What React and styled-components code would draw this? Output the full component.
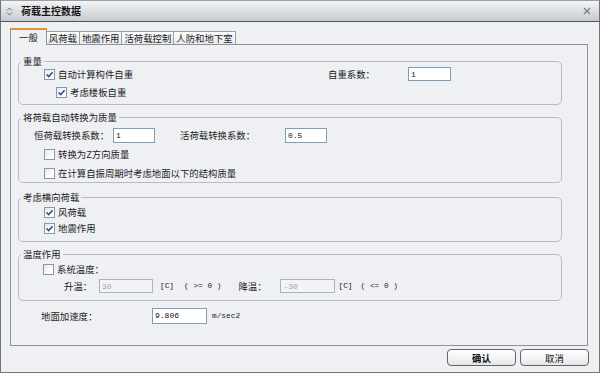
import React from "react";
import styled, { createGlobalStyle } from "styled-components";

const GlobalStyle = createGlobalStyle`
  html, body {
    margin: 0;
    padding: 0;
    background: #ffffff;
  }
  body {
    font-family: "Noto Sans CJK SC", "Noto Sans", sans-serif;
  }
  * {
    box-sizing: border-box;
  }
`;

const Window = styled.div`
  width: 600px;
  height: 373px;
  display: flex;
  flex-direction: column;
  background: #eef0f4;
  border: 1px solid #6f737a;
  border-top-color: #9a9ea5;
  font-size: 9.4px;
  line-height: 12px;
  color: #1c1c1c;
  overflow: hidden;
`;

const TitleBar = styled.div`
  height: 21px;
  flex: none;
  display: flex;
  align-items: center;
  padding: 0 8px 0 5px;
  background: linear-gradient(#f3f4f6, #dadde1 55%, #c6cad0);
  border-bottom: 1px solid #50545a;
`;

const Title = styled.span`
  margin-left: 8px;
  font-size: 10px;
  font-weight: bold;
  color: #151515;
`;

const Close = styled.span`
  margin-left: auto;
  display: flex;
`;

const Body = styled.div`
  flex: 1;
  display: flex;
  flex-direction: column;
  padding: 6px 11px 0 9px;
`;

const TabStrip = styled.div`
  height: 17px;
  margin-bottom: -1px;
  display: flex;
  align-items: flex-end;
`;

const Tab = styled.div`
  height: ${(p) => (p.$active ? 17 : 14)}px;
  padding: ${(p) => (p.$active ? "1px 8px 0" : "0 2px")};
  border: 1px solid ${(p) => (p.$active ? "#8d9199" : "#9aa0a8")};
  border-top: ${(p) => (p.$active ? "2px solid #e8912f" : "1px solid #9aa0a8")};
  border-bottom: none;
  margin-left: ${(p) => (p.$active ? 0 : -1)}px;
  background: ${(p) =>
    p.$active ? "#eef0f4" : "linear-gradient(#fdfdfd, #e9eaed)"};
  position: ${(p) => (p.$active ? "relative" : "static")};
  z-index: ${(p) => (p.$active ? 2 : "auto")};
  white-space: nowrap;
  line-height: 12px;
  color: #1a1a1a;
`;

const Panel = styled.div`
  height: 302px;
  flex: none;
  border: 1px solid #8d9199;
  padding: 10px 25px 0 7px;
  display: flex;
  flex-direction: column;
  background: #eef0f4;
`;

const Group = styled.fieldset`
  margin: ${(p) => p.$top || 0}px 0 0 0;
  padding: 0;
  border: 1px solid #b9bcc4;
  border-radius: 5px;
  min-width: 0;
`;

const Legend = styled.legend`
  margin-left: 2px;
  padding: 0 2px;
  height: 12px;
  line-height: 12px;
  font-size: 9.4px;
  color: #1c1c1c;
`;

const GroupBody = styled.div`
  display: flex;
  flex-direction: column;
  gap: ${(p) => p.$gap || 0}px;
  padding: ${(p) => p.$pad};
`;

const Row = styled.div`
  display: flex;
  align-items: center;
  height: ${(p) => p.$h}px;
  padding-left: ${(p) => p.$indent || 0}px;
  margin-top: ${(p) => p.$top || 0}px;
  flex: none;
`;

const Cell = styled.span`
  flex: none;
  width: ${(p) => (p.$w ? `${p.$w}px` : "auto")};
  margin-left: ${(p) => p.$ml || 0}px;
  white-space: nowrap;
`;

const Mono = styled.span`
  flex: none;
  margin-left: ${(p) => p.$ml || 0}px;
  font-family: "Liberation Mono", "DejaVu Sans Mono", monospace;
  font-size: 7.8px;
  white-space: pre;
  color: #222;
`;

const Field = styled.input`
  flex: none;
  width: ${(p) => p.$w}px;
  height: ${(p) => p.$h || 15}px;
  padding: 0 2px;
  margin: 0;
  border: 1px solid ${(p) => (p.disabled ? "#aab5c2" : "#7f9db9")};
  background: ${(p) => (p.disabled ? "#f3f3f3" : "#ffffff")};
  color: ${(p) => (p.disabled ? "#a3a3a3" : "#111")};
  font-family: "Liberation Mono", "DejaVu Sans Mono", monospace;
  font-size: 8px;
  outline: none;
`;

const CheckLabel = styled.label`
  display: flex;
  align-items: center;
  flex: none;
  width: ${(p) => (p.$w ? `${p.$w}px` : "auto")};
  white-space: nowrap;
`;

const Box = styled.span`
  width: 11px;
  height: 11px;
  flex: none;
  margin-right: 3px;
  border: 1px solid #8898a8;
  background: linear-gradient(135deg, #e4e6ea, #ffffff 70%);
  display: flex;
  align-items: center;
  justify-content: center;
`;

const Footer = styled.div`
  display: flex;
  justify-content: flex-end;
  gap: 4px;
  margin: 3px -1px 0 0;
`;

const Button = styled.button`
  width: 69px;
  height: 17px;
  padding: 0;
  border: 1px solid #626469;
  border-radius: 4px;
  background: linear-gradient(#ffffff, #f2f2f3 60%, #e2e3e6);
  font-family: "Noto Sans CJK SC", "Noto Sans", sans-serif;
  font-size: 9.4px;
  font-weight: ${(p) => (p.$primary ? "bold" : "normal")};
  line-height: 12px;
  color: #111;
`;

function Check({ checked, children, w }) {
  return (
    <CheckLabel $w={w}>
      <Box>
        {checked && (
          <svg width="9" height="9" viewBox="0 0 9 9">
            <path
              d="M1.6 4.4 L3.7 6.6 L7.6 2.2"
              fill="none"
              stroke="#2b4c86"
              strokeWidth="1.5"
            />
          </svg>
        )}
      </Box>
      {children}
    </CheckLabel>
  );
}

const tabs = ["一般", "风荷载", "地震作用", "活荷载控制", "人防和地下室"];

export default function App() {
  return (
    <>
      <GlobalStyle />
      <Window>
        <TitleBar>
          <svg width="7" height="9" viewBox="0 0 7 9">
            <path
              d="M1 3.5 L3.5 1 L6 3.5 M1 5.5 L3.5 8 L6 5.5"
              fill="none"
              stroke="#6a6d72"
              strokeWidth="1"
            />
          </svg>
          <Title>荷载主控数据</Title>
          <Close>
            <svg width="8" height="8" viewBox="0 0 8 8">
              <path
                d="M1 1 L7 7 M7 1 L1 7"
                stroke="#7c7f84"
                strokeWidth="1.3"
              />
            </svg>
          </Close>
        </TitleBar>
        <Body>
          <TabStrip>
            {tabs.map((t, i) => (
              <Tab key={t} $active={i === 0}>
                {t}
              </Tab>
            ))}
          </TabStrip>
          <Panel>
            <Group>
              <Legend>重量</Legend>
              <GroupBody $pad="0 0 5px 0" $gap={4}>
                <Row $h={14} $indent={25}>
                  <Check checked w={284}>
                    自动计算构件自重
                  </Check>
                  <Cell $w={80}>自重系数：</Cell>
                  <Field $w={43} $h={14} defaultValue="1" readOnly />
                </Row>
                <Row $h={14} $indent={37}>
                  <Check checked>考虑楼板自重</Check>
                </Row>
              </GroupBody>
            </Group>

            <Group $top={6}>
              <Legend>将荷载自动转换为质量</Legend>
              <GroupBody $pad="3px 0 0 0" $gap={1}>
                <Row $h={18} $indent={15}>
                  <Cell $w={79}>恒荷载转换系数：</Cell>
                  <Field $w={42} defaultValue="1" readOnly />
                  <Cell $w={105} $ml={25}>
                    活荷载转换系数：
                  </Cell>
                  <Field $w={42} defaultValue="0.5" readOnly />
                </Row>
                <Row $h={18} $indent={25}>
                  <Check>转换为Z方向质量</Check>
                </Row>
                <Row $h={18} $indent={25}>
                  <Check>在计算自振周期时考虑地面以下的结构质量</Check>
                </Row>
              </GroupBody>
            </Group>

            <Group $top={8}>
              <Legend>考虑横向荷载</Legend>
              <GroupBody $pad="1px 0 5px 0">
                <Row $h={16} $indent={25}>
                  <Check checked>风荷载</Check>
                </Row>
                <Row $h={16} $indent={25}>
                  <Check checked>地震作用</Check>
                </Row>
              </GroupBody>
            </Group>

            <Group $top={6}>
              <Legend>温度作用</Legend>
              <GroupBody $pad="1px 0 5px 0">
                <Row $h={16} $indent={24}>
                  <Check>系统温度：</Check>
                </Row>
                <Row $h={18} $indent={45}>
                  <Cell $w={35}>升温：</Cell>
                  <Field $w={54} $h={14} defaultValue="30" disabled />
                  <Mono $ml={7}>[C]</Mono>
                  <Mono $ml={10}>( &gt;= 0 )</Mono>
                  <Cell $w={42} $ml={17}>
                    降温：
                  </Cell>
                  <Field $w={55} $h={14} defaultValue="-30" disabled />
                  <Mono $ml={3}>[C]</Mono>
                  <Mono $ml={8}>( &lt;= 0 )</Mono>
                </Row>
              </GroupBody>
            </Group>

            <Row $h={17} $top={6} $indent={23}>
              <Cell $w={111}>地面加速度：</Cell>
              <Field $w={55} $h={16} defaultValue="9.806" readOnly />
              <Mono $ml={5}>m/sec2</Mono>
            </Row>
          </Panel>
          <Footer>
            <Button $primary>确认</Button>
            <Button>取消</Button>
          </Footer>
        </Body>
      </Window>
    </>
  );
}
